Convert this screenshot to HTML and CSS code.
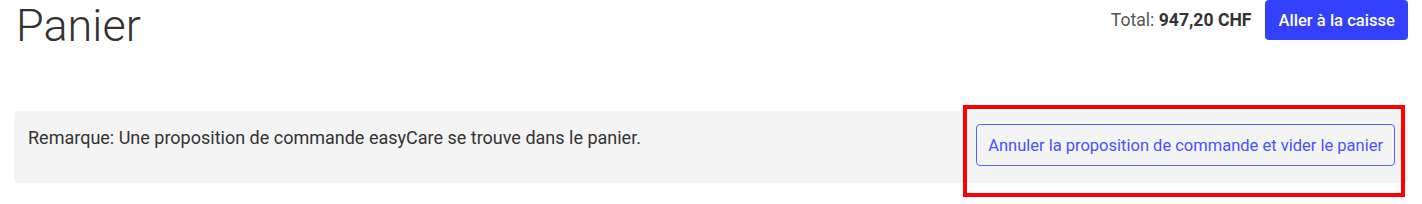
FILE: index.html
```html
<!DOCTYPE html>
<html>
<head>
    <link rel="stylesheet" href="styles.css">
</head>
<body>
    <div class="cart">
        <div class="cart-head">
            <h1>Panier</h1>
            <div class="checkout">
                <span class="total">Total: <strong>947,20 CHF</strong></span>
                <button class="btn-primary">Aller à la caisse</button>
            </div>
        </div>

        <div class="notice">
            <p>Remarque: Une proposition de commande easyCare se trouve dans le panier.</p>
            <div class="notice-action">
                <button class="btn-outline">Annuler la proposition de commande et vider le panier</button>
                <span class="highlight"></span>
            </div>
        </div>
    </div>
</body>
</html>
```

FILE: styles.css
```css
body {
    margin: 0;
    background: #fff;
    font-family: Roboto, "Liberation Sans", sans-serif;
    color: #333;
}
.cart {
    padding: 0 14px 21px;
}
.cart-head {
    display: flex;
    justify-content: space-between;
    align-items: flex-start;
}
h1 {
    margin: 0 0 0 2px;
    font-size: 45px;
    font-weight: 300;
    line-height: 52px;
    color: #333;
}
.checkout {
    display: flex;
    align-items: center;
    gap: 14px;
}
.total {
    font-size: 17.6px;
    color: #555;
}
.total strong {
    color: #333;
    font-weight: 700;
}
.btn-primary {
    height: 40px;
    padding: 0 13px;
    background: #3341ff;
    color: #fff;
    border: none;
    border-radius: 4px;
    font-family: inherit;
    font-size: 16.6px;
    font-weight: 500;
    cursor: pointer;
}
.notice {
    margin-top: 59px;
    display: flex;
    justify-content: space-between;
    align-items: flex-start;
    padding: 13px 13px 17px 14px;
    background: #f4f4f4;
    border-radius: 4px;
}
.notice p {
    margin: 2px 0 0;
    font-size: 18px;
    line-height: 24px;
    color: #333;
}
.notice-action {
    position: relative;
    display: flex;
}
.btn-outline {
    height: 42px;
    padding: 0 11px;
    background: #f4f4f4;
    color: #4a52ff;
    border: 1px solid #5a62ff;
    border-radius: 4px;
    font-family: inherit;
    font-size: 16.5px;
    cursor: pointer;
}
.highlight {
    position: absolute;
    box-sizing: border-box;
    left: -13px;
    top: -19px;
    width: 442px;
    height: 92px;
    border: 4px solid #ff0000;
    pointer-events: none;
}
```
